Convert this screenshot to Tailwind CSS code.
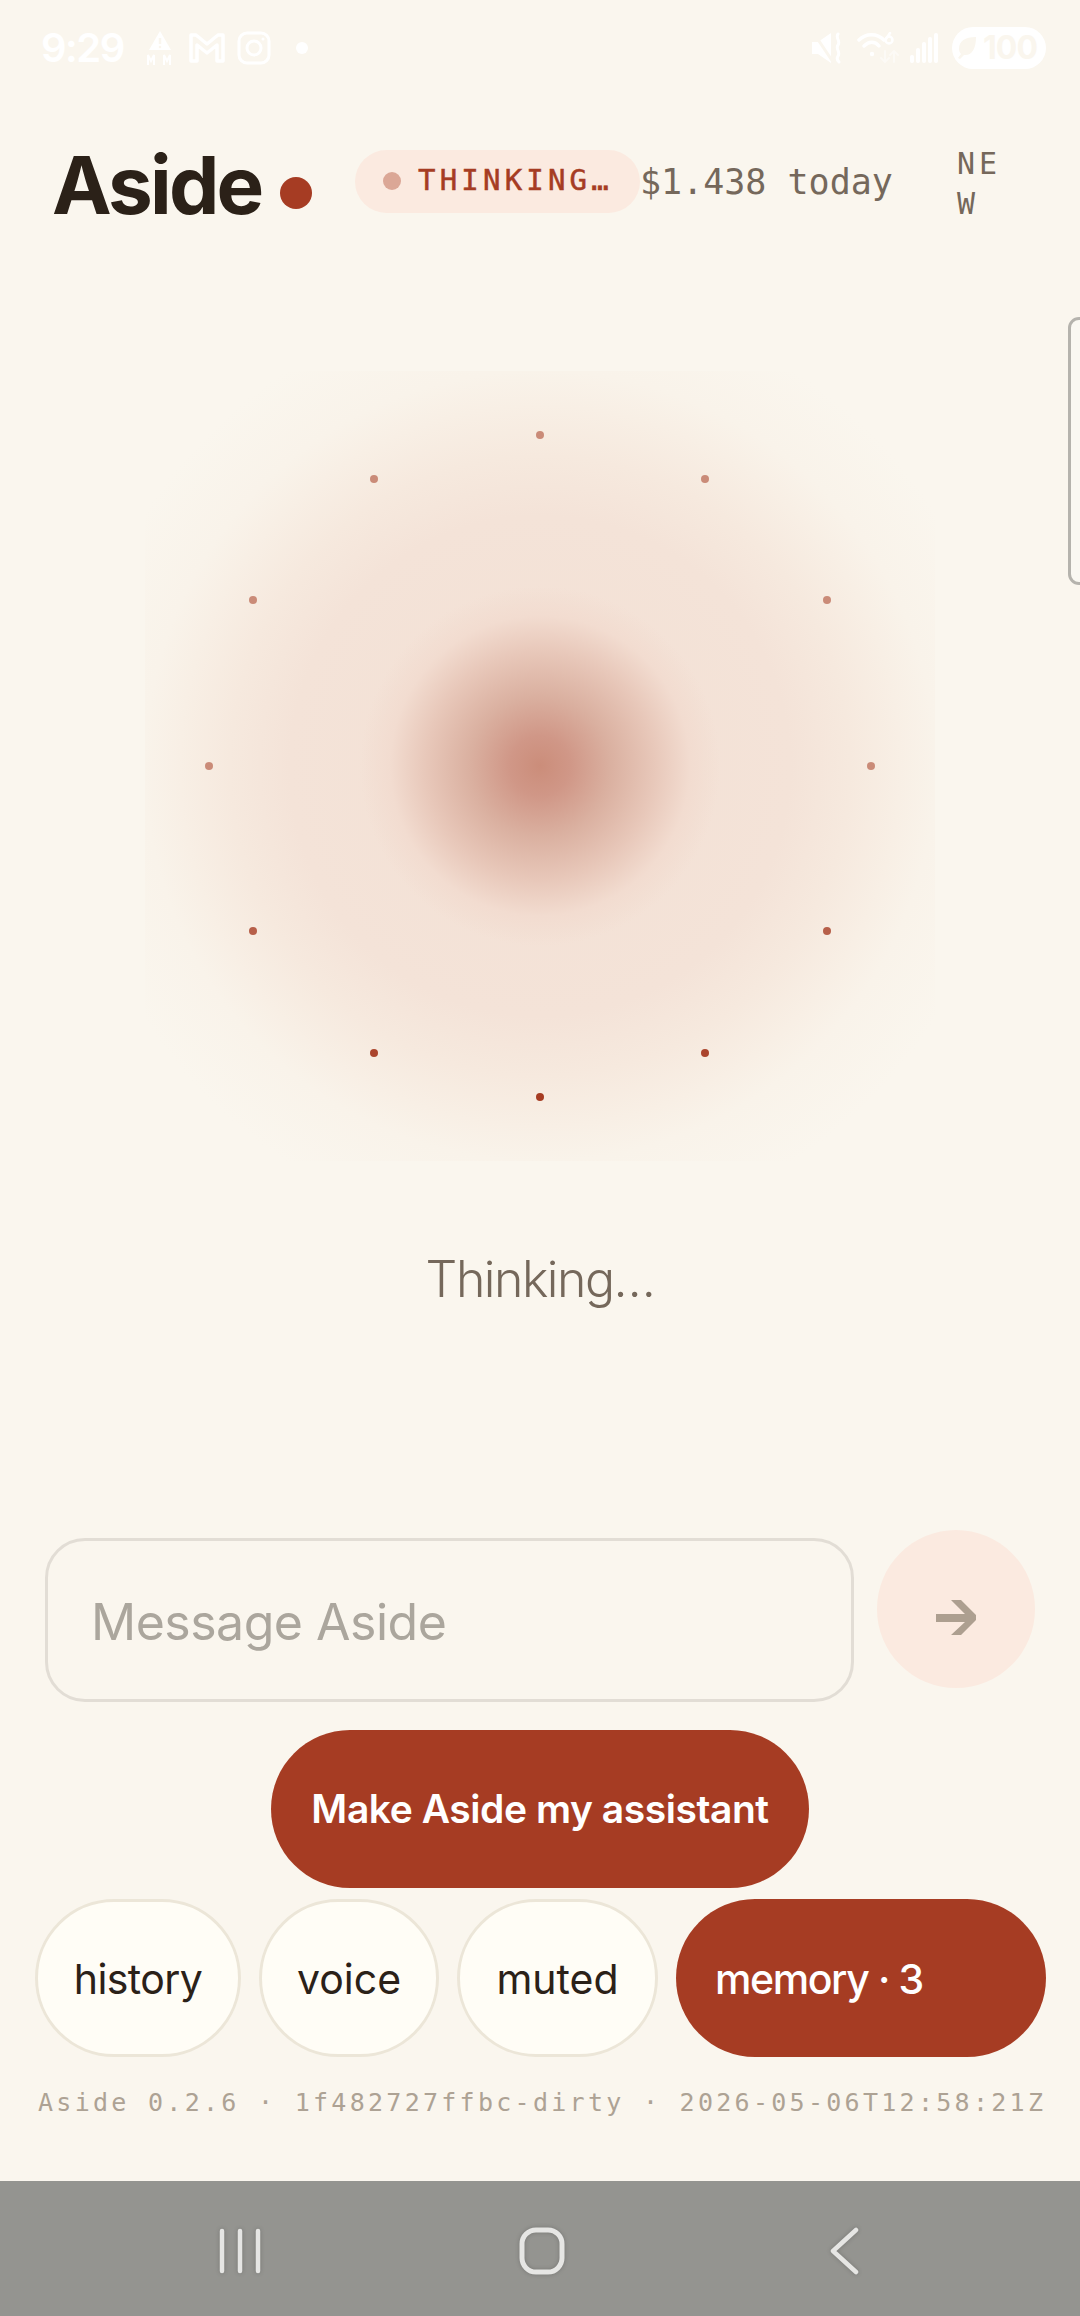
<!DOCTYPE html>
<html lang="en">
<head>
    <meta charset="UTF-8">
    <meta name="viewport" content="width=device-width, initial-scale=1.0">
    <title>Aside</title>
    <script src="https://cdn.jsdelivr.net/npm/@tailwindcss/browser@4"></script>
</head>
<body class="bg-[#faf6ee] font-['Inter',sans-serif] text-[#2b2118]">
<div class="relative w-[1080px] h-[2316px] flex flex-col overflow-hidden">

    <!-- status bar -->
    <div class="h-[96px] flex items-center justify-between pl-[41px] pr-[34px] text-white">
        <div class="flex items-center">
            <span class="text-[40px] font-semibold tracking-[-1.5px] leading-none whitespace-nowrap">9:29</span>
            <svg class="ml-[21px]" width="30" height="36" viewBox="0 0 30 36" fill="white"><path d="M15 1 L26 20 H4 Z"/><path d="M15 8 V14" stroke="#faf6ee" stroke-width="2.5"/><circle cx="15" cy="17" r="1.3" fill="#faf6ee"/><path d="M3 35 V25 L6 31 L9 25 V35" fill="none" stroke="white" stroke-width="2"/><path d="M19 35 V25 L22 31 L25 25 V35" fill="none" stroke="white" stroke-width="2"/></svg>
            <svg class="ml-[14px]" width="36" height="30" viewBox="0 0 36 30" fill="none" stroke="white" stroke-width="3.5" stroke-linejoin="round"><path d="M2 2 H7 L18 11 L29 2 H34 V28 H28 V12 L18 20 L8 12 V28 H2 Z"/></svg>
            <svg class="ml-[12px]" width="34" height="34" viewBox="0 0 34 34" fill="none" stroke="white" stroke-width="3"><rect x="2" y="2" width="30" height="30" rx="8"/><circle cx="17" cy="17" r="7"/><circle cx="26" cy="8" r="1.5" fill="white" stroke="none"/></svg>
            <span class="ml-[25px] w-[12px] h-[12px] rounded-full bg-white"></span>
        </div>
        <div class="flex items-center">
            <svg width="30" height="32" viewBox="0 0 30 32" fill="white"><path d="M0 10 H6 L19 1 V31 L6 22 H0 Z"/><path d="M1 0 L21 30" stroke="#faf6ee" stroke-width="3"/><path d="M26 2 C23 6 29 9 26 13 C23 17 29 20 26 24 C24 27 26 29 27 30" fill="none" stroke="white" stroke-width="3" stroke-linecap="round"/></svg>
            <svg class="ml-[15px]" width="44" height="32" viewBox="0 0 44 32" fill="none" stroke="white" stroke-width="3.5" stroke-linecap="round"><path d="M2 8 C9 1 20 1 27 8"/><path d="M7 14 C12 9 18 9 22 14"/><circle cx="15" cy="22" r="2.2" fill="white" stroke="none"/><circle cx="32" cy="8" r="3.5" stroke-width="2.5"/><path d="M33 1 L29 7" stroke-width="2.5"/><path d="M28 19 V30 M24 26 L28 30 L32 26" stroke-width="2" stroke="white" opacity="0.45"/><path d="M37 30 V19 M33 23 L37 19 L41 23" stroke-width="2" stroke="white" opacity="0.45"/></svg>
            <svg class="ml-[9px]" width="28" height="30" viewBox="0 0 28 30" fill="white"><rect x="0" y="22" width="4" height="8" rx="2"/><rect x="6" y="15" width="4" height="15" rx="2"/><rect x="12" y="9" width="4" height="21" rx="2"/><rect x="18" y="4" width="4" height="26" rx="2"/><rect x="24" y="0" width="4" height="30" rx="2"/></svg>
            <div class="ml-[14px] w-[94px] h-[42px] rounded-full bg-white flex items-center pl-[5px] gap-[7px]">
                <svg width="19" height="24" viewBox="0 0 19 24" fill="#faf6ee"><path d="M19 1 C8 1 2 5 2 13 C2 15 3 17 4 18 L1 22 L3 23 L7 19 C14 20 19 14 19 1 Z"/></svg>
                <span class="text-[32px] font-bold tracking-[-1px] text-[#faf6ee] leading-none">100</span>
            </div>
        </div>
    </div>

    <!-- header -->
    <div class="mt-[45px] h-[80px] flex items-center pl-[52px] relative">
        <span class="mt-[8px] w-[208px] text-[80px] font-bold tracking-[-2.8px] leading-none">Aside</span>
        <span class="ml-[20px] mt-[23px] w-[32px] h-[32px] rounded-full bg-[#a63c23]"></span>
        <div class="ml-[43px] w-[285px] h-[63px] rounded-full bg-[#fbeae0] flex items-center pl-[28px]">
            <span class="w-[18px] h-[18px] rounded-full bg-[#dba796]"></span>
            <span class="ml-[17px] font-['DejaVu_Sans_Mono',monospace] text-[29px] tracking-[4.2px] text-[#a63c23] [-webkit-text-stroke:0.5px_#a63c23]">THINKING…</span>
        </div>
        <span class="mt-[2px] font-['DejaVu_Sans_Mono',monospace] text-[35px] text-[#75685b]">$1.438 today</span>
        <span class="ml-[64px] mt-[6px] w-[46px] font-['DejaVu_Sans_Mono',monospace] text-[30px] leading-[40px] tracking-[4px] text-[#75685b] break-all">NEW</span>
    </div>

    <!-- drawer handle on the right edge -->
    <div class="absolute right-[-10px] top-[317px] w-[22px] h-[268px] rounded-[12px] border-[3px] border-[#b5b3ad] bg-[#faf8f2]"></div>

    <!-- orb -->
    <div class="mt-[150px] mx-auto relative w-[790px] h-[790px] shrink-0">
        <div class="absolute inset-0 bg-[radial-gradient(circle_at_center,#f3e0d4_0px,#f4e3d8_250px,#f6e9de_310px,#f8efe5_360px,#f9f3ea_395px,#faf6ee_470px)]"></div>
        <div class="absolute inset-0 bg-[radial-gradient(circle_at_center,#cb8d7a_0px,#d09787_30px,#dab0a0_70px,#e8c8ba_115px,#f2dcd0_150px,transparent_180px)]"></div>
        <span class="absolute left-[391px] top-[60px] w-[8px] h-[8px] rounded-full bg-[#a63c23]/55"></span>
        <span class="absolute left-[556px] top-[104px] w-[8px] h-[8px] rounded-full bg-[#a63c23]/55"></span>
        <span class="absolute left-[678px] top-[225px] w-[8px] h-[8px] rounded-full bg-[#a63c23]/55"></span>
        <span class="absolute left-[722px] top-[391px] w-[8px] h-[8px] rounded-full bg-[#a63c23]/55"></span>
        <span class="absolute left-[678px] top-[556px] w-[8px] h-[8px] rounded-full bg-[#a63c23]/80"></span>
        <span class="absolute left-[556px] top-[678px] w-[8px] h-[8px] rounded-full bg-[#a63c23]/95"></span>
        <span class="absolute left-[391px] top-[722px] w-[8px] h-[8px] rounded-full bg-[#a63c23]"></span>
        <span class="absolute left-[225px] top-[678px] w-[8px] h-[8px] rounded-full bg-[#a63c23]/95"></span>
        <span class="absolute left-[104px] top-[556px] w-[8px] h-[8px] rounded-full bg-[#a63c23]/80"></span>
        <span class="absolute left-[60px] top-[391px] w-[8px] h-[8px] rounded-full bg-[#a63c23]/55"></span>
        <span class="absolute left-[104px] top-[225px] w-[8px] h-[8px] rounded-full bg-[#a63c23]/55"></span>
        <span class="absolute left-[225px] top-[104px] w-[8px] h-[8px] rounded-full bg-[#a63c23]/55"></span>
    </div>

    <!-- status text -->
    <div class="mt-[84px] text-center text-[50px] font-light tracking-[-1.5px] leading-[68px] text-[#75685b]">Thinking…</div>

    <div class="flex-1"></div>

    <!-- composer -->
    <div class="flex items-start pl-[45px] pr-[45px]">
        <div class="w-[809px] h-[164px] rounded-[40px] border-[3px] border-[#e2ddd5] flex items-center pl-[43px] pt-[4px] text-[50px] tracking-[-0.5px] text-[#aba69d]">Message Aside</div>
        <button class="ml-[23px] -mt-[8px] w-[158px] h-[158px] rounded-full bg-[#fbeae0] flex items-center justify-center">
            <svg class="mt-[17px]" width="40" height="35" viewBox="0 0 40 35" fill="#ad9f90"><polygon points="0,14 29,14 15,0 25,0 40,15 40,20 25,35 15,35 29,22 0,22"/></svg>
        </button>
    </div>

    <!-- actions -->
    <div class="mt-[28px] flex justify-center">
        <button class="w-[538px] h-[158px] rounded-full bg-[#a63c23] text-white text-[39px] font-semibold tracking-[-0.45px]">Make Aside my assistant</button>
    </div>
    <div class="mt-[11px] flex gap-[18px] pl-[35px]">
        <button class="w-[206px] h-[158px] pt-[3px] rounded-full border-[3px] border-[#ece6d8] bg-[#fffdf6] text-[41px] tracking-[-0.6px] text-[#2b2118]">history</button>
        <button class="w-[180px] h-[158px] pt-[3px] rounded-full border-[3px] border-[#ece6d8] bg-[#fffdf6] text-[41px] text-[#2b2118]">voice</button>
        <button class="w-[201px] h-[158px] pt-[3px] rounded-full border-[3px] border-[#ece6d8] bg-[#fffdf6] text-[41px] text-[#2b2118]">muted</button>
        <button class="w-[370px] h-[158px] pt-[3px] rounded-full bg-[#a63c23] text-white text-[41px] font-medium tracking-[-1.4px] text-left pl-[39px]">memory · 3</button>
    </div>

    <!-- build line -->
    <div class="mt-[29px] h-[34px] pl-[38px] font-['DejaVu_Sans_Mono',monospace] text-[25px] leading-[34px] tracking-[3.28px] whitespace-nowrap text-[#ada294]">Aside 0.2.6 · 1f482727ffbc-dirty · 2026-05-06T12:58:21Z</div>
    <div class="h-[61px]"></div>

    <!-- android nav bar -->
    <div class="h-[135px] bg-[#949490] flex items-center relative">
        <svg class="absolute left-[218px] top-[47px] drop-shadow-[0_0_2px_rgba(0,0,0,0.2)]" width="44" height="46" viewBox="0 0 44 46" fill="none" stroke="#e6e6e4" stroke-width="4.5" stroke-linecap="round"><path d="M4 3 V43"/><path d="M22 3 V43"/><path d="M40 3 V43"/></svg>
        <svg class="absolute left-[519px] top-[46px] drop-shadow-[0_0_2px_rgba(0,0,0,0.2)]" width="46" height="48" viewBox="0 0 46 48" fill="none" stroke="#e6e6e4" stroke-width="5"><rect x="3" y="3" width="40" height="42" rx="14"/></svg>
        <svg class="absolute left-[828px] top-[46px] drop-shadow-[0_0_2px_rgba(0,0,0,0.2)]" width="32" height="48" viewBox="0 0 32 48" fill="none" stroke="#e6e6e4" stroke-width="4.5" stroke-linecap="round" stroke-linejoin="round"><path d="M28 3 L5 24 L28 45"/></svg>
    </div>
</div>
</body>
</html>
